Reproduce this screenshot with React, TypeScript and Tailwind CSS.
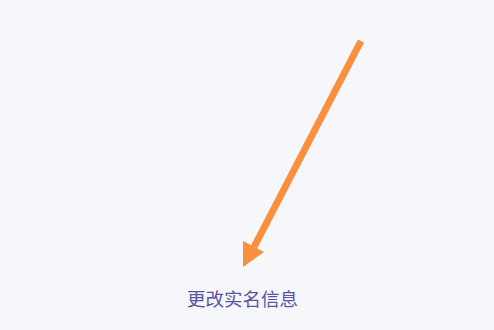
export default function App() {
  return (
    <div className="relative flex h-[330px] w-full flex-col items-center justify-end bg-[#f6f7fb] pb-[20px] pr-[9px]">
      {/* annotation arrow */}
      <svg
        className="absolute left-0 top-0"
        width="494"
        height="330"
        viewBox="0 0 494 330"
        fill="none"
      >
        <line
          x1="361"
          y1="41"
          x2="254"
          y2="247"
          stroke="#fb8f3c"
          strokeWidth="7"
          strokeLinecap="butt"
        />
        <polygon points="243,267 243,241 264,252" fill="#fb8f3c" />
      </svg>

      <span
        className="text-[18.5px] leading-[24px] text-[#5a52a6]"
        style={{ fontFamily: '"Noto Sans CJK SC", "Noto Sans", sans-serif' }}
      >
        更改实名信息
      </span>
    </div>
  );
}
